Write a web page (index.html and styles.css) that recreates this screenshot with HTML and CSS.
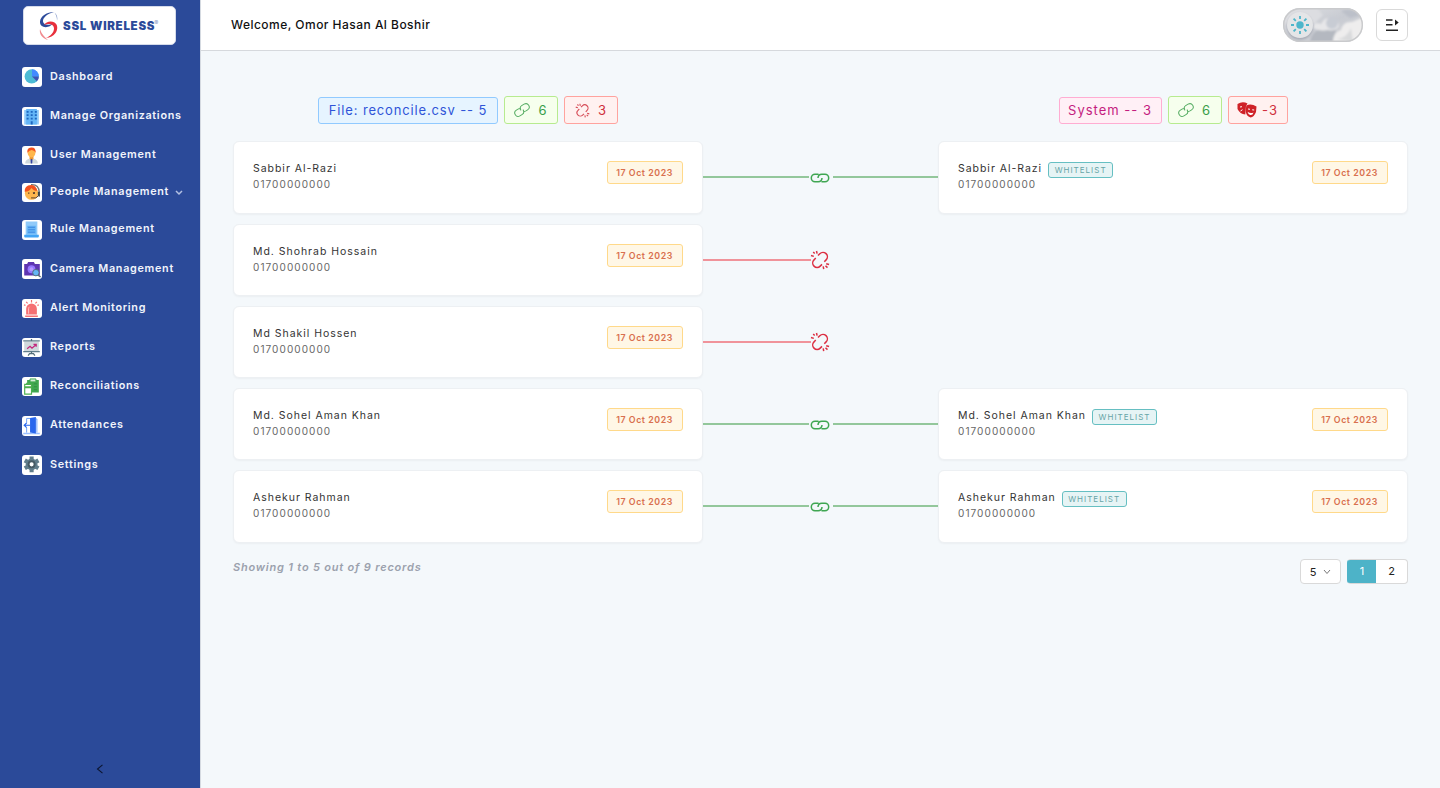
FILE: index.html
```html
<!DOCTYPE html>
<html lang="en">
<head>
<meta charset="utf-8">
<title>Reconciliations</title>
<link rel="stylesheet" href="styles.css">
</head>
<body>
<svg class="defs" width="0" height="0">
  <symbol id="chain" viewBox="0 0 20 10"><path d="M8.5 1.3H5a3.7 3.7 0 0 0 0 7.4h3.200q3.600 0 3.800-3.700M11.500 8.700H15a3.7 3.7 0 0 0 0-7.400h-3.200q-3.600 0-3.800 3.700" fill="none" stroke="currentColor" stroke-width="1.500"/></symbol>
  <symbol id="broken" viewBox="0 0 20 20"><g fill="none" stroke="currentColor" stroke-width="1.500"><path d="M8 5.500 9.800 3.700a4.300 4.300 0 0 1 6.300 6.200L14.300 11.700M5.700 8 4 9.900a4.300 4.300 0 0 0 6.200 6.200L12 14.400M6.500 1l.6 2.700M1 5.500l2.800.9M13.200 16.400l.5 2.700M16.200 13.800l2.900.7M3.200 2l1.500 1.600M15.500 15.800l2 1.800"/></g></symbol>
  <symbol id="link" viewBox="0 0 16 16"><g fill="none" stroke="currentColor" stroke-width="1" transform="rotate(14 8 8)"><path d="M6.200 7.400a2.900 2.900 0 0 1 .4-3.600l2-2a3.300 3.300 0 0 1 4.800 4.700l-1.700 1.700q-1 .9-2.200.8M9.800 8.600a2.900 2.900 0 0 1-.4 3.600l-2 2a3.300 3.300 0 0 1-4.800-4.700l1.700-1.700q1-.9 2.200-.8M6.200 7.400q.4.800 1 1.200M9.800 8.600q-.4-.8-1-1.200"/></g></symbol>
</svg>
<div class="app">
  <aside class="sidebar">
    <div class="logo">
      <svg width="20" height="30" viewBox="0 0 20 30"><path d="M15 1C8 1 1.500 5 1 10.500.7 15 5 17 9 15.800c2.500-.7 4-2 5-3.300-3.500 2-9.500 2-10-2C3.500 6.500 9 2.500 15 1Z" fill="#2d4b9b"/><path d="M5 14C7 10.500 12 9.500 15.500 11.500c3.500 2 3.500 7 1 10.500-2 3-5.500 4.500-9.500 5 4.500-2 8-5.500 8-9.500 0-4.500-6-5.500-10-3.500Z" fill="#e8303c"/><path d="M1 18c-1 5 2 9 8 11-3.500-3-6.500-6-8-11Z" fill="#f08b90"/><path d="M15.500 1.500c2.500 2 3.500 5 2.500 8.500 0-3-.5-5.500-2.500-8.500Z" fill="#8196c8"/></svg>
      <span class="logo-text">SSL WIRELESS</span><span class="logo-mark">®</span>
    </div>
    <nav class="nav">
      <a class="item"><svg class="ico" viewBox="0 0 20 20"><circle cx="9.700" cy="9.700" r="7.300" fill="#4dbbd5"/><path d="M10 9.700V2.200a7.300 7.300 0 0 1 7 7.500Z" fill="#448aff"/><path d="M10 9.700h7a7 7 0 0 1-2 5Z" fill="#3f51b5"/></svg><span>Dashboard</span></a>
      <a class="item"><svg class="ico" viewBox="0 0 20 20"><path d="M2 3h15v15H2Z" fill="#90caf9"/><path d="M4 2h11v16H4Z" fill="#64b5f6"/><path d="M4.500 4h2v1.800h-2ZM8.700 4h2v1.800h-2ZM12.900 4h2v1.800h-2ZM4.500 7.500h2v1.800h-2ZM8.700 7.500h2v1.800h-2ZM12.900 7.500h2v1.800h-2ZM4.500 11h2v1.800h-2ZM8.700 11h2v1.800h-2ZM12.900 11h2v1.800h-2ZM8.700 14.500h2V18h-2Z" fill="#1e67c0"/></svg><span>Manage Organizations</span></a>
      <a class="item"><svg class="ico" viewBox="0 0 20 20"><path d="M3 18q0-4 4-5h5q4 1 4 5Z" fill="#cfd8dc"/><path d="M7.500 10h4v3l-2 2-2-2Z" fill="#ef9830"/><path d="m9.500 13 1 1-.3 4H8.800l-.3-4Z" fill="#3444a0"/><ellipse cx="9.500" cy="7" rx="4" ry="4.700" fill="#ffb74d"/><path d="M5.300 7Q4.500 2 9 1.500q5-.5 4.800 5.500-1-2.500-4-3-2.500 0-4.500 3Z" fill="#f4511e"/></svg><span>User Management</span></a>
      <a class="item short"><svg class="ico" viewBox="0 0 20 20"><path d="M9 1.700q8.500-.5 8.500 8.300v4" fill="none" stroke="#777" stroke-width="1.400"/><circle cx="9.500" cy="10.500" r="6.800" fill="#ffb74d"/><path d="M2.500 9Q2 2.500 9 2q5 0 6.500 6-4 0-6-3-2 3.500-7 4Z" fill="#f4511e"/><path d="M6 9.700h1.300v1.300H6Z" fill="#59402c"/><path d="m11 9.300 2 2M13 9.300l-2 2M9 15.300h5l3.500-3" fill="none" stroke="#59402c"/><path d="M16 9h2v4h-2Z" fill="#37474f"/></svg><span>People Management</span><svg class="chev" width="8" height="6" viewBox="0 0 8 6"><path d="m1 1 3 3 3-3" fill="none" stroke="#b3c0e2" stroke-width="1.500"/></svg></a>
      <a class="item"><svg class="ico" viewBox="0 0 20 20"><path d="M3.500 1.500h12V16h-12Z" fill="#90caf9"/><path d="M5 6h9v8H5Z" fill="#64b5f6"/><path d="M6 7.500h7M6 10h7M6 12.500h7" stroke="#3f87df"/><path d="M2 15h15v2q0 1-1 1H3q-1 0-1-1Z" fill="#42a5f5"/></svg><span>Rule Management</span></a>
      <a class="item"><svg class="ico" viewBox="0 0 20 20"><path d="M2 5h3l1-2h6l1 2h5v12H2Z" fill="#5e35b1"/><circle cx="9.500" cy="10.500" r="4" fill="#9575ff"/><circle cx="9.500" cy="10.500" r="2" fill="#b69aff"/><circle cx="14" cy="14" r="3.300" fill="#64b5f6" stroke="#546e7a"/><path d="m16.300 16.500 2.500 2" stroke="#546e7a" stroke-width="1.500"/></svg><span>Camera Management</span></a>
      <a class="item"><svg class="ico" viewBox="0 0 20 20"><path d="M4 16V10a5.500 5.500 0 0 1 11 0v6ZM3 17h13v1.500H3Z" fill="#f56f73"/><path d="M6.500 15v-5q0-1.500 1-2" fill="none" stroke="#ffc3c3"/><path d="M9.500 1v2.500M4 3l1.500 1.500M15 3l-1.500 1.500M1.800 6l1.500.5M17 6l-1.500.5" stroke="#f56f73" stroke-width="1.200"/></svg><span>Alert Monitoring</span></a>
      <a class="item"><svg class="ico" viewBox="0 0 20 20"><path d="M2 3.500h15v10H2Z" fill="#cfd8dc"/><path d="M1 3h17M1 14h17" stroke="#607d8b" stroke-width="1.300"/><path d="M9.500 1v2M9.500 14v2M6 18l1.500-2h4l1.500 2" stroke="#546e7a" fill="none" stroke-width="1.300"/><path d="m5 11 3-2.500 2 2L14 7M11.500 6.500h2.800V9" fill="none" stroke="#c2277d" stroke-width="1.300"/></svg><span>Reports</span></a>
      <a class="item"><svg class="ico" viewBox="0 0 20 20"><path d="M5 3h12v13H5Z" fill="#3fa750"/><path d="M8 2h6v3H8Z" fill="#d5ecd7" stroke="#3fa750"/><path d="M12 7h3M12 10h3M12 13h3" stroke="#318d42"/><path d="M2.500 7.500h7v10h-7Z" fill="#fff" stroke="#4caf50" stroke-width="1.200"/><path d="M2.500 9.500h7v2h-7ZM4 6h4v2H4Z" fill="#4caf50"/></svg><span>Reconciliations</span></a>
      <a class="item"><svg class="ico" viewBox="0 0 20 20"><path d="M1 18h17" stroke="#9cc0ff" stroke-width="1.500"/><path d="M4.500 7V2.500H8M4.500 12v5M14 3h1v14" fill="none" stroke="#6da0fb"/><path d="m8 2 6-1v17l-6-1Z" fill="#2866ed"/><path d="M8 9.500H2M4.500 7 2 9.500 4.500 12" fill="none" stroke="#2866ed" stroke-width="1.200"/></svg><span>Attendances</span></a>
      <a class="item"><svg class="ico" viewBox="0 0 20 20"><g stroke="#607d8b" stroke-width="4.200"><path d="M9.600 1.500v16.200M2.600 5.500l14 8.200M2.600 13.700l14-8.200"/></g><circle cx="9.600" cy="9.600" r="6" fill="#607d8b"/><circle cx="9.600" cy="9.600" r="3.100" fill="#fff" stroke="#455a64" stroke-width="2"/></svg><span>Settings</span></a>
    </nav>
    <div class="collapse"><svg width="8" height="10" viewBox="0 0 8 10"><path d="M6.500.8 1.500 5l5 4.200" fill="none" stroke="#0c1530" stroke-width="1.100"/></svg></div>
  </aside>
  <div class="page">
    <header class="header">
      <div class="welcome">Welcome, Omor Hasan Al Boshir</div>
      <div class="actions">
        <svg class="toggle" width="80" height="34" viewBox="0 0 80 34">
          <defs>
            <clipPath id="pill"><rect width="80" height="34" rx="17"/></clipPath>
            <linearGradient id="sky" x2="1" y2="1"><stop stop-color="#dfe0e3"/><stop offset=".5" stop-color="#c8cbd2"/><stop offset="1" stop-color="#d4d5d8"/></linearGradient>
            <filter id="soft"><feGaussianBlur stdDeviation="1.300"/></filter>
          </defs>
          <g clip-path="url(#pill)"><rect width="80" height="34" fill="url(#sky)"/>
            <g filter="url(#soft)"><path d="M0 0h34l6 7-9 9H0Z" fill="#dcdde1"/><path d="M27 34q2-12 12-13l14 1-2 12Z" fill="#b4b8c0"/><path d="M30 20q1-7 8-4 3-7 9-6 8 0 9 8-4 6-11 4-8 2-15-2Z" fill="#e7e7e9"/><circle cx="49" cy="15" r="6" fill="#c8ccd4"/><path d="M50 34q0-10 8-12 2-9 11-8l12-5v25H50Z" fill="#eeeded"/><path d="M58 3q10-4 20 4l-11 3Z" fill="#bcc0c9"/><path d="M54 31q10-1 14-11l2 14Z" fill="#d9dadc"/></g></g>
          <rect x=".7" y=".7" width="78.600" height="32.600" rx="16.300" fill="none" stroke="#c9cacc" stroke-width="1.400"/>
          <circle cx="17" cy="18.500" r="13" fill="#8d929d" opacity=".6" filter="url(#soft)"/><circle cx="17" cy="17" r="13" fill="#e4e5e7"/>
          <g stroke="#4db6cb" stroke-width="1.800"><path d="M17 8v3M17 23v3M8 17h3M23 17h3M10.600 10.600l2.200 2.200M21.200 21.200l2.200 2.200M10.600 23.400l2.200-2.200M21.200 12.800l2.200-2.200"/></g><circle cx="17" cy="17" r="3.700" fill="#4db6cb"/>
        </svg>
        <button class="menu"><svg width="14" height="14" viewBox="0 0 14 14"><path d="M1 2h6.500M1 6.700h6.500M1 12.300h12" stroke="#222" stroke-width="1.500"/><path d="m10 1.500 3.700 3-3.700 3Z" fill="#222"/></svg></button>
      </div>
    </header>
    <main class="main">
      <div class="summary">
        <div class="group file-group">
          <span class="chip blue"><span>File: reconcile.csv -- 5</span></span>
          <span class="chip green"><svg width="16" height="16"><use href="#link"/></svg><span>6</span></span>
          <span class="chip red"><svg width="15" height="15" viewBox="0 0 20 20"><use href="#broken"/></svg><span>3</span></span>
        </div>
        <div class="group system-group">
          <span class="chip pink"><span>System -- 3</span></span>
          <span class="chip green"><svg width="16" height="16"><use href="#link"/></svg><span>6</span></span>
          <span class="chip red fraud"><svg width="20" height="16" viewBox="0 0 20 16"><path d="M.5 2q5-3 10-.5L9 4l-.7 8.500Q3 12 .5 7Z" fill="#cf2127"/><path d="M9.300 3.500Q14 1 19.500 4.500L19 10q-2 5-5.500 5.500Q9 14 8.700 9Z" fill="#cf2127"/><path d="m3 5 2-.3M3.500 9l2-1.300M11 7l2 .3M15.200 7.800l2 .2" stroke="#fff"/><path d="M10.500 9.700q3 2.300 6 .8-.8 3-3.300 2.500-2-.5-2.700-3.300Z" fill="#fff"/></svg><span>-3</span></span>
        </div>
      </div>
      <div class="rows">
        <div class="row"><section class="card"><div class="person"><div class="name"><span>Sabbir Al-Razi</span></div><div class="phone">01700000000</div></div><span class="date">17 Oct 2023</span></section><div class="join ok"><i></i><svg width="20" height="10"><use href="#chain"/></svg><i></i></div><section class="card"><div class="person"><div class="name"><span>Sabbir Al-Razi</span><b>WHITELIST</b></div><div class="phone">01700000000</div></div><span class="date">17 Oct 2023</span></section></div>
        <div class="row"><section class="card"><div class="person"><div class="name"><span>Md. Shohrab Hossain</span></div><div class="phone">01700000000</div></div><span class="date">17 Oct 2023</span></section><div class="join bad"><i></i><svg width="20" height="20"><use href="#broken"/></svg></div></div>
        <div class="row"><section class="card"><div class="person"><div class="name"><span>Md Shakil Hossen</span></div><div class="phone">01700000000</div></div><span class="date">17 Oct 2023</span></section><div class="join bad"><i></i><svg width="20" height="20"><use href="#broken"/></svg></div></div>
        <div class="row"><section class="card"><div class="person"><div class="name"><span>Md. Sohel Aman Khan</span></div><div class="phone">01700000000</div></div><span class="date">17 Oct 2023</span></section><div class="join ok"><i></i><svg width="20" height="10"><use href="#chain"/></svg><i></i></div><section class="card"><div class="person"><div class="name"><span>Md. Sohel Aman Khan</span><b>WHITELIST</b></div><div class="phone">01700000000</div></div><span class="date">17 Oct 2023</span></section></div>
        <div class="row"><section class="card"><div class="person"><div class="name"><span>Ashekur Rahman</span></div><div class="phone">01700000000</div></div><span class="date">17 Oct 2023</span></section><div class="join ok"><i></i><svg width="20" height="10"><use href="#chain"/></svg><i></i></div><section class="card"><div class="person"><div class="name"><span>Ashekur Rahman</span><b>WHITELIST</b></div><div class="phone">01700000000</div></div><span class="date">17 Oct 2023</span></section></div>
      </div>
      <footer class="footer">
        <div class="showing">Showing 1 to 5 out of 9 records</div>
        <div class="pager">
          <div class="size">5<svg width="8" height="6" viewBox="0 0 8 6"><path d="m1 1 3 3.500L7 1" fill="none" stroke="#777"/></svg></div>
          <div class="pages"><span class="current">1</span><span>2</span></div>
        </div>
      </footer>
    </main>
  </div>
</div>
</body>
</html>
```

FILE: styles.css
```css
* { box-sizing: border-box; }
body { margin: 0; font-family: Inter, "Liberation Sans", sans-serif; background: #f4f8fb; color: #222; }
svg { display: block; flex: none; }
.defs { position: absolute; }
.app { display: flex; height: 788px; overflow: hidden; }
.sidebar { width: 200px; flex: none; background: #2b4a99; display: flex; flex-direction: column; }
.logo { width: 153px; height: 39px; margin: 6px 0 0 23px; background: #fff; border: 1px solid #d5dbea; border-radius: 5px; display: flex; align-items: center; padding-left: 15px; }
.logo-text { margin-left: 4px; font: 900 11.500px Inter, sans-serif; color: #2b4a99; white-space: nowrap; letter-spacing: .72px; }
.logo-mark { font-size: 6px; color: #8496c4; align-self: flex-start; margin: 12px 0 0 -1px; }
.nav { display: flex; flex-direction: column; margin-top: 12.500px; }
.item { height: 39.200px; display: flex; align-items: center; padding-left: 22px; color: #f1f4fc; font-size: 10.800px; font-weight: 600; letter-spacing: .7px; white-space: nowrap; }
.item.short { height: 35.300px; }
.item span { margin-left: 8px; line-height: 14px; padding-bottom: 1px; }
.ico { width: 20px; height: 19.500px; background: #fff; border-radius: 3px; }
.chev { margin-left: 6px; }
.collapse { margin: auto 0 14px 96px; }
.page { flex: 1; border-left: 1px solid #d5dae1; }
.header { height: 51px; background: #fff; border-bottom: 1px solid #d6d9dd; display: flex; align-items: center; justify-content: space-between; padding: 0 32px 0 30px; }
.welcome { font-size: 12px; font-weight: 500; letter-spacing: .47px; color: #111; padding-bottom: 1px; }
.actions { display: flex; align-items: center; gap: 13px; }
.menu { width: 32px; height: 32px; background: #fff; border: 1px solid #d9d9d9; border-radius: 6px; padding: 0; display: flex; align-items: center; justify-content: center; }
.main { padding: 45px 32px 0; }
.summary { display: grid; grid-template-columns: 2fr 1fr 2fr; }
.group { display: flex; gap: 6px; justify-content: center; align-items: flex-end; }
.system-group { grid-column: 3; }
.chip { height: 28px; display: flex; align-items: center; border: 1px solid; border-radius: 3px; font-size: 13px; letter-spacing: 1px; white-space: nowrap; justify-content: center; gap: 8px; }
.chip span { padding-bottom: 1px; }
.blue { width: 180px; height: 27px; color: #2f54d8; background: #e6f4ff; border-color: #91caff; letter-spacing: .85px; }
.blue span, .pink span { padding-bottom: 2px; }
.green { width: 54px; color: #389e4a; background: #f6ffed; border-color: #b7eb8f; }
.red { width: 54px; color: #d0303d; background: #fff1f0; border-color: #ffa39e; }
.green svg, .red svg { opacity: .85; }
.pink { width: 103px; height: 27px; color: #c41d7f; background: #fff0f6; border-color: #ffadd2; }
.fraud { width: 60px; gap: 5px; }
.red.fraud svg { opacity: 1; }
.rows { display: flex; flex-direction: column; gap: 10px; margin-top: 17.300px; }
.row { display: grid; grid-template-columns: 2fr 1fr 2fr; height: 72.250px; }
.card { background: #fff; border: 1px solid #edf0f3; border-radius: 6px; box-shadow: 0 1px 2px rgba(0,0,0,.04); display: flex; justify-content: space-between; align-items: flex-start; padding: 19px 19px 0; }
.person { margin-top: -1px; }
.name { display: flex; align-items: center; height: 17px; font-size: 10.500px; letter-spacing: .97px; white-space: nowrap; color: #333; }
.name b { height: 16px; border: 1px solid #66bfc2; border-radius: 3px; background: #e6f4f5; color: #66a4a6; font-weight: 400; font-size: 8px; line-height: 14px; letter-spacing: 1px; width: 65px; text-align: center; margin-left: 6px; margin-top: 2px; }
.phone { font-size: 10px; line-height: 14px; letter-spacing: 1.080px; color: #666; }
.date { width: 76px; height: 23px; border: 1px solid #ffd98a; border-radius: 3px; background: #fff7e6; color: #d9704f; font-size: 8.800px; font-weight: 600; letter-spacing: .55px; line-height: 22px; padding-right: 1px; text-align: center; }
.join { display: flex; align-items: center; }
.join i { height: 2px; flex: 1; }
.ok { color: #3fa652; gap: 2px; }
.ok svg { margin: 1px 1px 0 -1px; }
.ok i { background: #93c79b; }
.bad { color: #dc2f42; }
.bad svg { margin-left: -1px; }
.bad i { background: #f0939a; flex: none; width: 108px; }
.footer { display: flex; justify-content: space-between; margin-top: 16.500px; }
.showing { font-size: 11px; font-weight: 600; font-style: italic; letter-spacing: .8px; line-height: 16px; color: #9ba1ad; }
.pager { display: flex; gap: 6px; font-size: 11px; }
.size { width: 41px; height: 25px; border: 1px solid #d9d9d9; border-radius: 4px; background: #fff; display: flex; align-items: center; justify-content: center; gap: 7px; }
.pages { display: flex; width: 61px; height: 25px; border: 1px solid #d9d9d9; border-radius: 4px; background: linear-gradient(90deg, #4db3c8 29px, #fff 29px) border-box; border-left-color: #4db3c8; overflow: hidden; }
.pages span { flex: 1; text-align: center; line-height: 22px; }
.pages .current { flex: 0 0 28px; background: #4db3c8; color: #fff; }
```
